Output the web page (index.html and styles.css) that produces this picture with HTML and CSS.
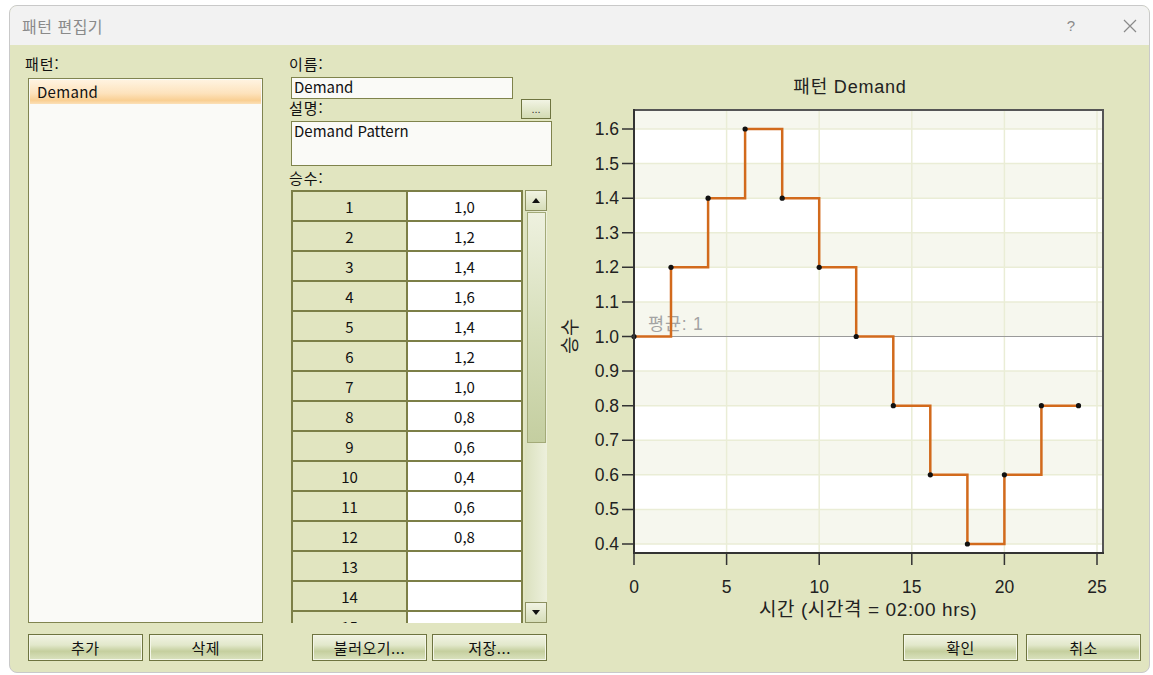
FILE: index.html
```html
<!DOCTYPE html>
<html lang="ko">
<head>
  <meta charset="UTF-8">
  <title>패턴 편집기</title>
  <link rel="stylesheet" href="styles.css">
</head>
<body>
  <div class="dialog">
    <div class="titlebar">
      <span class="title">패턴 편집기</span>
      <span class="help">?</span>
      <svg class="close" width="14" height="14" viewBox="0 0 14 14">
        <path d="M1 1 L13 13 M13 1 L1 13" stroke="#8a8a8a" stroke-width="1.2" fill="none"/>
      </svg>
    </div>

    <div class="content">
      <!-- pattern list -->
      <div class="col col-list">
        <div class="label lbl-pattern">패턴:</div>
        <div class="listbox">
          <div class="list-item selected">Demand</div>
        </div>
        <div class="btn-row">
          <button class="btn">추가</button>
          <button class="btn">삭제</button>
        </div>
      </div>

      <!-- name, description, multipliers -->
      <div class="col col-edit">
        <div class="label">이름:</div>
        <div class="field name-field">Demand</div>
        <div class="desc-row">
          <div class="label">설명:</div>
          <button class="dots">...</button>
        </div>
        <div class="field desc-field">Demand Pattern</div>
        <div class="label lbl-mult">승수:</div>
        <div class="grid-wrap">
          <div class="grid" id="mult-grid"></div>
          <div class="scrollbar">
            <div class="sb-btn"><span class="arrow-up"></span></div>
            <div class="sb-thumb"></div>
            <div class="sb-track"></div>
            <div class="sb-btn"><span class="arrow-down"></span></div>
          </div>
        </div>
        <div class="btn-row btn-row-edit">
          <button class="btn">불러오기...</button>
          <button class="btn">저장...</button>
        </div>
      </div>

      <!-- chart -->
      <div class="col col-chart">
        <svg class="chart" width="585" height="563" viewBox="560 60 585 563">
          <text x="850" y="93" class="c-title" text-anchor="middle">패턴 Demand</text>
          <rect x="634" y="110" width="469" height="443" fill="#ffffff"/>
          <g fill="#f6f7ee">
            <rect x="634" y="110" width="469" height="19"/>
            <rect x="634" y="163.6" width="469" height="34.6"/>
            <rect x="634" y="232.8" width="469" height="34.6"/>
            <rect x="634" y="301.9" width="469" height="34.6"/>
            <rect x="634" y="371.1" width="469" height="34.6"/>
            <rect x="634" y="440.3" width="469" height="34.6"/>
            <rect x="634" y="509.4" width="469" height="34.6"/>
          </g>
          <g stroke="#eaedd6" stroke-width="1.5">
            <path d="M634 129 H1103 M634 163.6 H1103 M634 198.2 H1103 M634 232.8 H1103 M634 267.3 H1103 M634 301.9 H1103 M634 371.1 H1103 M634 405.7 H1103 M634 440.3 H1103 M634 474.8 H1103 M634 509.4 H1103 M634 544 H1103"/>
            <path d="M726.6 110 V553 M819.2 110 V553 M911.8 110 V553 M1004.4 110 V553 M1097 110 V553"/>
          </g>
          <line x1="634" y1="336.5" x2="1103" y2="336.5" stroke="#9a9a9a" stroke-width="1.2"/>
          <text x="648" y="330" class="c-mean">평균: 1</text>
          <path d="M634 336.5 H671 V267.3 H708.1 V198.2 H745.1 V129 H782.2 V198.2 H819.2 V267.3 H856.2 V336.5 H893.3 V405.7 H930.3 V474.8 H967.4 V544 H1004.4 V474.8 H1041.4 V405.7 H1078.5"
                fill="none" stroke="#d26a1c" stroke-width="2.5"/>
          <g fill="#111">
            <circle cx="634" cy="336.5" r="2.6"/>
            <circle cx="671" cy="267.3" r="2.6"/>
            <circle cx="708.1" cy="198.2" r="2.6"/>
            <circle cx="745.1" cy="129" r="2.6"/>
            <circle cx="782.2" cy="198.2" r="2.6"/>
            <circle cx="819.2" cy="267.3" r="2.6"/>
            <circle cx="856.2" cy="336.5" r="2.6"/>
            <circle cx="893.3" cy="405.7" r="2.6"/>
            <circle cx="930.3" cy="474.8" r="2.6"/>
            <circle cx="967.4" cy="544" r="2.6"/>
            <circle cx="1004.4" cy="474.8" r="2.6"/>
            <circle cx="1041.4" cy="405.7" r="2.6"/>
            <circle cx="1078.5" cy="405.7" r="2.6"/>
          </g>
          <path d="M634 110 H1103 V553" fill="none" stroke="#555" stroke-width="2"/>
          <path d="M634 109 V553 H1104" fill="none" stroke="#333" stroke-width="2"/>
          <g stroke="#333" stroke-width="1.5">
            <path d="M622 129 H634 M622 163.6 H634 M622 198.2 H634 M622 232.8 H634 M622 267.3 H634 M622 301.9 H634 M622 336.5 H634 M622 371.1 H634 M622 405.7 H634 M622 440.3 H634 M622 474.8 H634 M622 509.4 H634 M622 544 H634"/>
            <path d="M634 553 V565 M726.6 553 V565 M819.2 553 V565 M911.8 553 V565 M1004.4 553 V565 M1097 553 V565"/>
          </g>
          <g class="c-tick" text-anchor="end">
            <text x="619" y="135">1.6</text>
            <text x="619" y="169.6">1.5</text>
            <text x="619" y="204.2">1.4</text>
            <text x="619" y="238.8">1.3</text>
            <text x="619" y="273.3">1.2</text>
            <text x="619" y="307.9">1.1</text>
            <text x="619" y="342.5">1.0</text>
            <text x="619" y="377.1">0.9</text>
            <text x="619" y="411.7">0.8</text>
            <text x="619" y="446.3">0.7</text>
            <text x="619" y="480.8">0.6</text>
            <text x="619" y="515.4">0.5</text>
            <text x="619" y="550">0.4</text>
          </g>
          <g class="c-tick" text-anchor="middle">
            <text x="634" y="593">0</text>
            <text x="726.6" y="593">5</text>
            <text x="819.2" y="593">10</text>
            <text x="911.8" y="593">15</text>
            <text x="1004.4" y="593">20</text>
            <text x="1097" y="593">25</text>
          </g>
          <text x="868" y="616" class="c-axis" text-anchor="middle">시간 (시간격 = 02:00 hrs)</text>
          <text x="0" y="0" class="c-axis" text-anchor="middle" transform="translate(577 336) rotate(-90)">승수</text>
        </svg>
        <div class="btn-row btn-row-chart">
          <button class="btn">확인</button>
          <button class="btn">취소</button>
        </div>
      </div>
    </div>
  </div>

  <script>
    // Multiplier grid rows
    const values = ['1,0', '1,2', '1,4', '1,6', '1,4', '1,2', '1,0', '0,8', '0,6', '0,4', '0,6', '0,8', '', '', ''];
    const grid = document.getElementById('mult-grid');
    values.forEach((v, i) => {
      const idx = document.createElement('div');
      idx.className = 'cell cell-idx';
      idx.textContent = i + 1;
      const val = document.createElement('div');
      val.className = 'cell cell-val';
      val.textContent = v;
      grid.appendChild(idx);
      grid.appendChild(val);
    });
  </script>
</body>
</html>
```

FILE: styles.css
```css
/* Pattern editor dialog */
body {
  margin: 0;
  padding: 0;
  background-color: #ffffff;
  font-family: "Noto Sans CJK KR", "DejaVu Sans", sans-serif;
}

.dialog {
  margin: 5px 0 0 9px;
  width: 1141px;
  height: 668px;
  border: 1px solid #c9c9c9;
  border-radius: 8px;
  overflow: hidden;
  background-color: #e1e5c0;
  box-sizing: border-box;
}

.titlebar {
  height: 39px;
  background-color: #f2f2f2;
  display: flex;
  align-items: center;
  padding-left: 12px;
}

.title {
  font-size: 16px;
  letter-spacing: 0.5px;
  color: #8a8a8a;
  flex: 1;
}

.help {
  font-family: "Liberation Sans", sans-serif;
  font-size: 15px;
  color: #8a8a8a;
  margin-right: 48px;
}

.close {
  margin-right: 12px;
}

.content {
  display: flex;
  padding-left: 18px;
}

.col {
  display: flex;
  flex-direction: column;
}

.label {
  font-size: 15px;
  letter-spacing: 1px;
  line-height: 16px;
  height: 16px;
  color: #111;
}

/* left column */
.col-list {
  width: 235px;
  padding-top: 11px;
}

.lbl-pattern {
  margin-left: -3px;
}

.listbox {
  margin-top: 6px;
  height: 545px;
  border: 1px solid #808450;
  background-color: #fafaf7;
  box-sizing: border-box;
  padding: 1px;
}

.list-item {
  height: 24px;
  line-height: 24px;
  padding-left: 7px;
  font-size: 15px;
  letter-spacing: 0.3px;
  color: #111;
}

.list-item.selected {
  background: linear-gradient(#fff3e0, #fde3bd 55%, #f9cf93 85%, #fbe0b8);
}

.btn-row {
  display: flex;
  gap: 6px;
  margin-top: 11px;
}

.btn {
  width: 115px;
  height: 27px;
  border: 1px solid #6e7440;
  box-shadow: inset 0 0 0 1px #f4f6e8;
  background: linear-gradient(#f2f4e4, #e2e8cb 40%, #c5cf9e 65%, #dbe3c0);
  font-family: "Noto Sans CJK KR", sans-serif;
  font-size: 15px;
  letter-spacing: 0.5px;
  color: #111;
  padding: 0;
}

/* middle column */
.col-edit {
  width: 263px;
  margin-left: 26px;
  padding-top: 11px;
}

.field {
  margin-left: 2px;
  border: 1px solid #7f834c;
  background-color: #fafaf7;
  box-sizing: border-box;
  font-size: 15px;
  line-height: 18px;
  padding-left: 2px;
  color: #111;
}

.name-field {
  margin-top: 5px;
  width: 222px;
  height: 22px;
}

.desc-row {
  display: flex;
  justify-content: space-between;
  align-items: flex-start;
  height: 22px;
}

.desc-row .label {
  margin-top: 1px;
}

.dots {
  width: 30px;
  height: 20px;
  margin-right: 1px;
  border: 1px solid #6e7440;
  background: linear-gradient(#f2f4e4, #d3dbb3);
  font-size: 11px;
  line-height: 12px;
  padding: 0;
  color: #333;
}

.desc-field {
  width: 261px;
  height: 45px;
}

.lbl-mult {
  margin-top: 4px;
}

.grid-wrap {
  display: flex;
  margin-top: 4px;
  margin-left: 2px;
  height: 433px;
  gap: 2px;
}

.grid {
  width: 232px;
  height: 433px;
  overflow: hidden;
  display: grid;
  grid-template-columns: 113px 113px;
  grid-auto-rows: 28px;
  gap: 2px;
  padding: 2px;
  background-color: #7c7f47;
  box-sizing: border-box;
  align-content: start;
}

.cell {
  display: flex;
  align-items: center;
  justify-content: center;
  font-size: 15px;
  color: #111;
}

.cell-idx {
  background-color: #e1e5c0;
}

.cell-val {
  background-color: #ffffff;
}

.scrollbar {
  width: 22px;
  display: flex;
  flex-direction: column;
  background: linear-gradient(90deg, #dbe1bf, #edf0dc);
}

.sb-btn {
  height: 21px;
  border: 1px solid #8c9060;
  box-sizing: border-box;
  background: linear-gradient(#f1f3e3, #d6ddb8);
  display: flex;
  align-items: center;
  justify-content: center;
}

.arrow-up {
  width: 0;
  height: 0;
  border-left: 4px solid transparent;
  border-right: 4px solid transparent;
  border-bottom: 5px solid #111;
}

.arrow-down {
  width: 0;
  height: 0;
  border-left: 4px solid transparent;
  border-right: 4px solid transparent;
  border-top: 5px solid #111;
}

.sb-thumb {
  height: 229px;
  margin: 1px 1px 0 2px;
  border: 1px solid #a3aa78;
  background: linear-gradient(#eef1df, #d7dfbb 50%, #c4cea0);
}

.sb-track {
  flex: 1;
}

.btn-row-edit {
  margin-left: 23px;
  gap: 5px;
}

/* chart column */
.col-chart {
  width: 585px;
  margin-left: 8px;
  padding-top: 15px;
}

.chart {
  display: block;
}

.c-title {
  font-family: "Liberation Sans", "Noto Sans CJK KR", sans-serif;
  font-size: 18px;
  letter-spacing: 0.8px;
  fill: #222;
}

.c-tick {
  font-family: "Liberation Sans", sans-serif;
  font-size: 17.5px;
  fill: #222;
}

.c-axis {
  font-family: "Liberation Sans", "Noto Sans CJK KR", sans-serif;
  font-size: 19px;
  letter-spacing: 0.6px;
  fill: #222;
}

.c-mean {
  font-family: "Liberation Sans", "Noto Sans CJK KR", sans-serif;
  font-size: 17.5px;
  letter-spacing: 0.8px;
  fill: #a3a3a3;
}

.btn-row-chart {
  justify-content: flex-end;
  gap: 8px;
  padding-right: 4px;
}
```
